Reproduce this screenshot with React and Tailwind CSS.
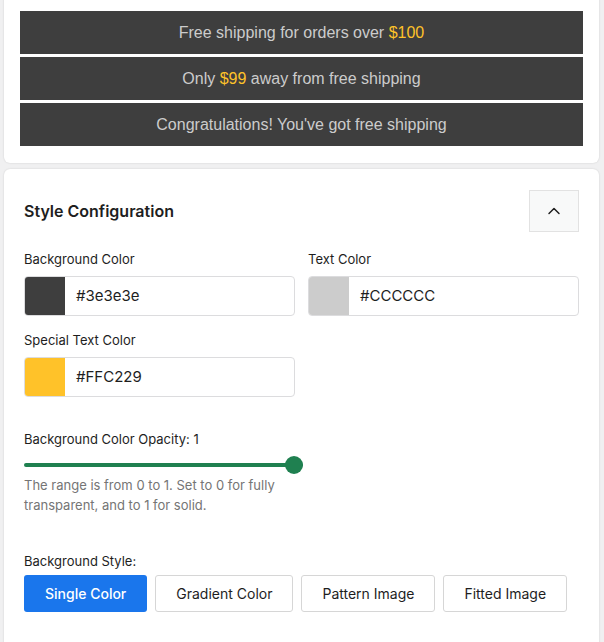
import React from "react";
import { ChevronUp } from "lucide-react";

const sans = { fontFamily: "Inter, 'Noto Sans', sans-serif" };

const Banner = ({ children }) => (
  <div
    className="h-[43px] bg-[#3e3e3e] flex items-center justify-center text-[16px] text-[#cccccc]"
    style={{ fontFamily: "'Liberation Sans', Arial, sans-serif" }}
  >
    {children}
  </div>
);

const ColorField = ({ label, swatch, value }) => (
  <div>
    <div className="text-[13px] text-[#1e1e1e] mb-[9px] leading-[16px]">{label}</div>
    <div className="flex h-[40px] border border-[#dcdcde] rounded-[4px] overflow-hidden bg-white">
      <div className={`w-[40px] shrink-0 ${swatch}`} />
      <div className="flex items-center pl-[11px] text-[15px] text-[#1e1e1e]">{value}</div>
    </div>
  </div>
);

export default function App() {
  const styles = ["Single Color", "Gradient Color", "Pattern Image", "Fitted Image"];
  return (
    <div className="w-[604px] h-[642px] overflow-hidden bg-[#f0f0f1]" style={sans}>
      {/* Preview card */}
      <div className="mx-[4px] mr-[5px] -mt-[10px] pt-[21px] pb-[17px] px-[16px] bg-white rounded-b-[6px] shadow-[0_0_2px_rgba(0,0,0,0.15)] flex flex-col gap-[3px]">
        <Banner>
          Free shipping for orders over&nbsp;<span className="text-[#FFC229]">$100</span>
        </Banner>
        <Banner>
          Only&nbsp;<span className="text-[#FFC229]">$99</span>&nbsp;away from free shipping
        </Banner>
        <Banner>Congratulations! You've got free shipping</Banner>
      </div>

      {/* Style configuration card */}
      <div className="mt-[6px] mx-[4px] mr-[5px] bg-white rounded-t-[6px] shadow-[0_0_2px_rgba(0,0,0,0.15)] px-[20px] pt-[21px] pb-[40px]">
        <div className="flex items-center justify-between">
          <h2 className="text-[16px] font-semibold text-[#1e1e1e]">Style Configuration</h2>
          <button className="w-[50px] h-[42px] bg-[#f8f9f9] border border-[#e2e2e2] flex items-center justify-center">
            <ChevronUp size={20} strokeWidth={1.75} className="text-[#1e1e1e]" />
          </button>
        </div>

        <div className="grid grid-cols-2 gap-x-[13px] gap-y-[16px] mt-[19px]">
          <ColorField label="Background Color" swatch="bg-[#3e3e3e]" value="#3e3e3e" />
          <ColorField label="Text Color" swatch="bg-[#cccccc]" value="#CCCCCC" />
          <ColorField label="Special Text Color" swatch="bg-[#FFC229]" value="#FFC229" />
        </div>

        <div className="mt-[34px] text-[13px] text-[#1e1e1e] leading-[16px]">
          Background Color Opacity: 1
        </div>
        <div className="relative w-[279px] h-[18px] mt-[9px] flex items-center">
          <div className="w-full h-[4px] bg-[#1f8050] rounded-full" />
          <div className="absolute right-0 w-[18px] h-[18px] rounded-full bg-[#1f8050]" />
        </div>
        <p className="mt-[1px] w-[270px] text-[13px] leading-[20px] text-[#757575]">
          The range is from 0 to 1. Set to 0 for fully transparent, and to 1 for solid.
        </p>

        <div className="mt-[38px] text-[13px] text-[#1e1e1e] leading-[16px]">Background Style:</div>
        <div className="flex gap-[8px] mt-[6px]">
          {styles.map((s, i) => (
            <button
              key={s}
              className={
                i === 0
                  ? "h-[37px] px-[21px] rounded-[3px] bg-[#1a76ec] text-white text-[14px] font-medium"
                  : "h-[37px] px-[20px] rounded-[3px] bg-white border border-[#d6d6d6] text-[#1e1e1e] text-[14px] font-normal"
              }
            >
              {s}
            </button>
          ))}
        </div>
      </div>
    </div>
  );
}
